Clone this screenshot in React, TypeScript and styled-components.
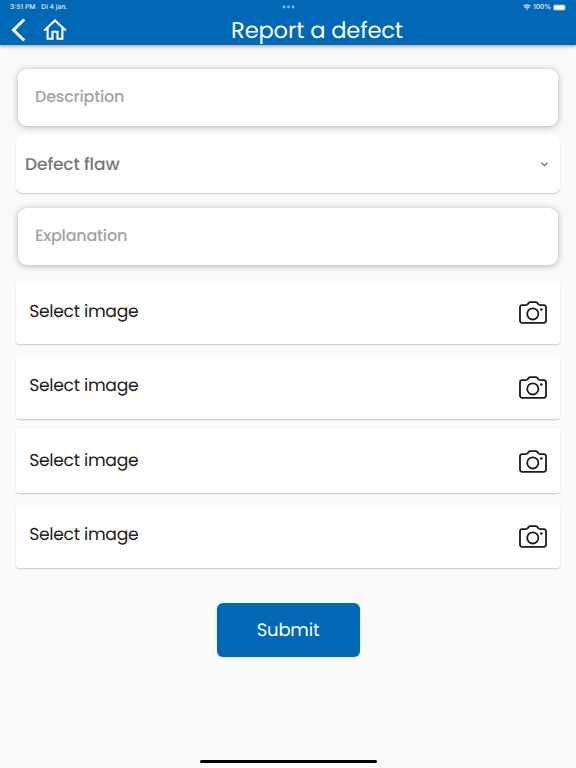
import React from "react";
import styled, { createGlobalStyle } from "styled-components";

const GlobalStyle = createGlobalStyle`
  *, *::before, *::after { box-sizing: border-box; }
  body { margin: 0; background: #fafafa; text-rendering: geometricPrecision; }
  button, input { font: inherit; text-rendering: inherit; }
`;

const Screen = styled.div`
  display: flex;
  flex-direction: column;
  width: 100%;
  height: 768px;
  overflow: hidden;
  background: #fafafa;
  font-family: Poppins, Inter, sans-serif;
`;

const Header = styled.header`
  flex: none;
  height: 45px;
  background: #0068b4;
  box-shadow: 0 1px 4px rgba(0, 0, 0, 0.4);
  color: #fff;
`;

const StatusBar = styled.div`
  display: grid;
  grid-template-columns: 1fr auto 1fr;
  align-items: center;
  height: 14px;
  padding: 0 9px 0 10px;
  font: 500 6.7px/14px Inter, sans-serif;
  color: #e4f0f9;
`;

const StatusGroup = styled.div<{ $end?: boolean }>`
  display: flex;
  align-items: center;
  justify-content: ${(p) => (p.$end ? "flex-end" : "flex-start")};
  gap: ${(p) => (p.$end ? "2px" : "6px")};
  white-space: nowrap;
`;

const Dots = styled.svg`
  display: block;
  width: 13px;
  height: 4px;
  fill: #74c3fa;
`;

const NavBar = styled.nav`
  display: grid;
  grid-template-columns: 68px 1fr 10px;
  height: 31px;
`;

const NavIcons = styled.div`
  display: flex;
  align-items: center;
  gap: 17px;
  padding: 0 0 1px 11px;

  svg { flex: none; }
`;

const Title = styled.h1`
  margin: 0;
  text-align: center;
  font-size: 22.6px;
  line-height: 32px;
  font-weight: 400;
  letter-spacing: -0.15px;
  white-space: nowrap;
`;

const Form = styled.form`
  display: flex;
  flex-direction: column;
  flex: 1;
  padding: 24px 16px 0;
`;

const Field = styled.input`
  display: block;
  height: 57px;
  margin: 0 2px;
  padding: 0 17px 2px;
  border: 0;
  outline: 0;
  border-radius: 9px;
  background: #fff;
  box-shadow: 0 1px 7px rgba(0, 0, 0, 0.3);
  font-size: 16px;
  font-weight: 500;
  letter-spacing: -0.2px;

  &::placeholder { color: #a4a4a4; opacity: 1; }
`;

const SelectRow = styled.div`
  display: flex;
  align-items: center;
  justify-content: space-between;
  height: 58px;
  margin: 9px 0 15px;
  padding: 0 12px 0 9px;
  border-radius: 7px;
  background: #fff;
  box-shadow: 0 1px 1.5px rgba(0, 0, 0, 0.18);
  color: #787878;
  font-size: 17.1px;
  line-height: 25px;
  font-weight: 500;
  letter-spacing: -0.13px;
`;

const ImageList = styled.div`
  display: grid;
  gap: 11.5px;
  margin-top: 16px;
`;

const ImageRow = styled.div`
  display: flex;
  align-items: center;
  justify-content: space-between;
  height: 63px;
  padding: 0 13px 0 13.2px;
  border-radius: 3px;
  background: #fff;
  box-shadow: 0 1px 1.5px rgba(0, 0, 0, 0.2);
  color: #222;
  font-size: 17.2px;
  line-height: 25.5px;
  font-weight: 400;
  letter-spacing: -0.3px;

  svg { margin-top: 1px; }
`;

const SubmitButton = styled.button`
  align-self: center;
  width: 143px;
  height: 54px;
  margin-top: 35.5px;
  padding: 1px 0 0;
  border: 0;
  border-radius: 6px;
  background: #0068b4;
  box-shadow: 0 1px 3px rgba(0, 0, 0, 0.12);
  color: #fff;
  font-size: 18px;
  font-weight: 400;
  letter-spacing: -0.2px;
`;

const HomeIndicator = styled.div`
  flex: none;
  align-self: center;
  width: 177px;
  height: 3.4px;
  margin-bottom: 4.6px;
  border-radius: 2px;
  background: #000;
`;

const Camera = () => (
  <svg width="28" height="24" viewBox="0 0 28 24" fill="none" stroke="#1b1b1b" strokeWidth="1.8" strokeLinejoin="round">
    <path d="M3.2 4.2h3.2c1 0 1.5-.3 2.1-.9l1-1.2c.5-.6 1-.9 1.900-.9h5.200c.9 0 1.400.3 1.900.9l1 1.200c.6.6 1.100.9 2.100.9h3.200c1.400 0 2.200.8 2.200 2.200v13.200c0 1.400-.8 2.200-2.200 2.200H3.200C1.800 21.800 1 21 1 19.600V6.400C1 5 1.800 4.200 3.200 4.200Z" />
    <circle cx="13.800" cy="12.900" r="5.600" />
    <circle cx="22.300" cy="8.500" r="1.300" fill="#1b1b1b" stroke="none" />
  </svg>
);

const Back = () => (
  <svg width="15" height="24" viewBox="0 0 15 24" fill="none" stroke="#fff" strokeWidth="3">
    <path d="M13.200 1.500 2.500 12l10.700 10.500" />
  </svg>
);

const Home = () => (
  <svg width="24" height="22" viewBox="0 0 24 22" fill="none" stroke="#fff" strokeWidth="2.100">
    <path d="M1.200 11.400 12 1.500l10.800 9.900M4.600 8.800v11h4.900v-7h5v7h4.900v-11" />
  </svg>
);

const Wifi = () => (
  <svg width="8" height="6" viewBox="0 0 8 6" fill="none" stroke="#e4f0f9" strokeWidth="1.150">
    <path d="M.5 2.300Q4-.7 7.500 2.300M1.800 3.700Q4 1.900 6.200 3.700" />
    <path d="M2.900 4.700Q4 3.900 5.100 4.700L4 5.900Z" fill="#e4f0f9" stroke="none" />
  </svg>
);

const Battery = () => (
  <svg width="14" height="7" viewBox="0 0 14 7">
    <rect x=".3" y=".7" width="12" height="5.600" rx="1.600" fill="none" stroke="#a6cae5" strokeWidth=".5" />
    <rect x=".9" y="1.200" width="10.900" height="4.600" rx="1" fill="#fff" />
    <path d="M13 2.700q.9.800 0 1.600Z" fill="#a6cae5" />
  </svg>
);

const Chevron = () => (
  <svg width="7" height="5" viewBox="0 0 7 5" fill="none" stroke="#6c6c6c" strokeWidth="1.200">
    <path d="m.5.8 3 2.900 3-2.900" />
  </svg>
);

const imageSlots = [1, 2, 3, 4];

export default function App() {
  return (
    <>
      <GlobalStyle />
      <Screen>
        <Header>
          <StatusBar>
            <StatusGroup><span>3:51 PM</span><span>Di 4 jan.</span></StatusGroup>
            <Dots viewBox="0 0 13 4">
              <circle cx="2" cy="2" r="1.450" />
              <circle cx="6.500" cy="2" r="1.450" />
              <circle cx="11" cy="2" r="1.450" />
            </Dots>
            <StatusGroup $end><Wifi /><span>100%</span><Battery /></StatusGroup>
          </StatusBar>
          <NavBar>
            <NavIcons><Back /><Home /></NavIcons>
            <Title>Report a defect</Title>
          </NavBar>
        </Header>
        <Form onSubmit={(e: React.FormEvent) => e.preventDefault()}>
          <Field placeholder="Description" />
          <SelectRow><span>Defect flaw</span><Chevron /></SelectRow>
          <Field placeholder="Explanation" />
          <ImageList>
            {imageSlots.map((slot) => (
              <ImageRow key={slot}><span>Select image</span><Camera /></ImageRow>
            ))}
          </ImageList>
          <SubmitButton>Submit</SubmitButton>
        </Form>
        <HomeIndicator />
      </Screen>
    </>
  );
}
